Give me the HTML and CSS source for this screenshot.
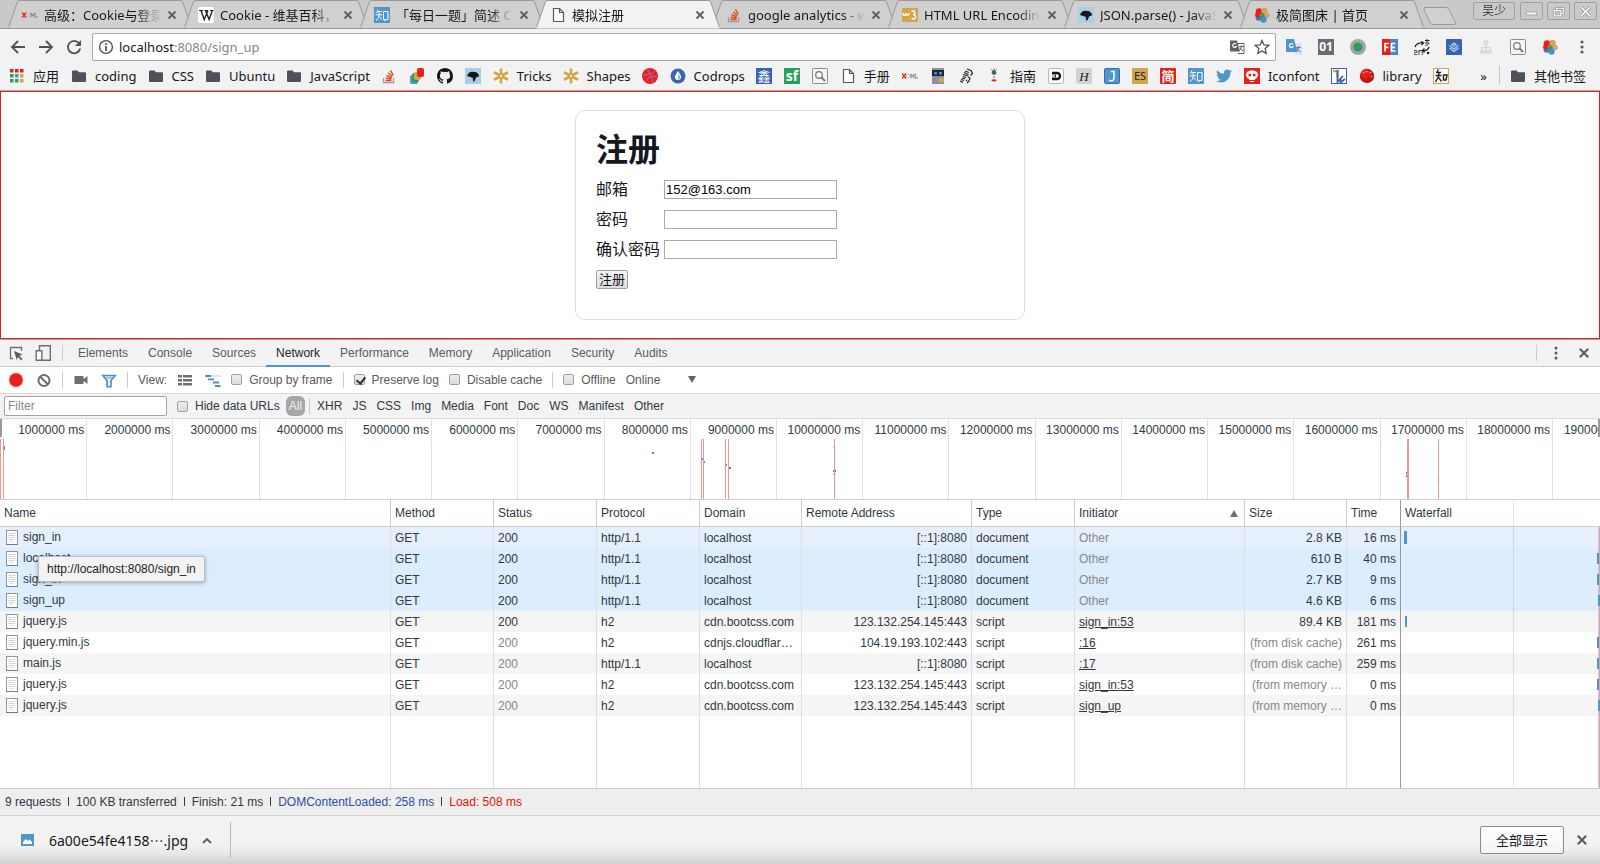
FILE: index.html
```html
<!DOCTYPE html>
<html lang="zh-CN">
<head>
  <meta charset="UTF-8" />
  <meta name="viewport" content="width=device-width, initial-scale=1.0" />
  <title>模拟注册</title>
  <link rel="stylesheet" href="styles.css">
</head>
<body>

<!-- shared icons -->
<svg class="sprite" aria-hidden="true">
  <symbol id="tab-shape" viewBox="0 0 188 29" preserveAspectRatio="none">
    <path d="M0 28.5 C2 28.5 2.500 27 3 26 L11 3 C11.500 1.500 12 .5 14 .5 H174 C176 .5 176.500 1.500 177 3 L185 26 C185.500 27 186 28.500 188 28.500" />
  </symbol>
  <symbol id="close" viewBox="0 0 10 10">
    <path d="M1.500 1.500 8.500 8.500 M8.500 1.500 1.500 8.500" fill="none" stroke="currentColor" stroke-width="1.800" />
  </symbol>
  <symbol id="folder" viewBox="0 0 16 16">
    <path d="M1 3.500a1 1 0 0 1 1-1h4.500l1.500 1.800H14a1 1 0 0 1 1 1V13a1 1 0 0 1-1 1H2a1 1 0 0 1-1-1z" fill="#4e525a" />
  </symbol>
  <symbol id="doc" viewBox="0 0 16 16">
    <path d="M3.500 1.500h6l4 4v9h-10z M9.500 1.500v4h4" fill="#fff" stroke="#55585e" stroke-width="1.200" />
  </symbol>
  <symbol id="xml" viewBox="0 0 16 16">
    <path d="M0 5.500l4 5M4 5.500l-4 5" stroke="#e8201a" stroke-width="1.400" fill="none" />
    <ellipse cx="6.200" cy="8" rx="1.800" ry="2.200" fill="none" stroke="#e5bd86" />
    <path d="M9 10.500V6l1.500 3L12 6v4.500" stroke="#4a91c8" fill="none" />
    <path d="M13.500 5.500V10H16" stroke="#d2a24a" stroke-width="1.300" fill="none" />
  </symbol>
  <symbol id="wiki" viewBox="0 0 16 16">
    <rect width="16" height="16" rx="2" fill="#fff" />
    <path d="M1 3.500h4M6.500 3.500h3.500M12 3.500h3.500" stroke="#222" stroke-width="1" fill="none" />
    <path d="M3 3.500l3.200 9 3.800-9M7.500 3.500l3.600 9 3.200-9" stroke="#222" stroke-width="1.400" fill="none" />
  </symbol>
  <symbol id="zhihu" viewBox="0 0 16 16">
    <rect width="16" height="16" fill="#4f96cd" />
    <path d="M4 2.500 2.500 6M3.500 4.500H8M1.500 7.800H8.200M5.200 4.500v3.300C5 11 3.500 12.500 2 13.500M5.500 9.500 8 12.500M9.500 4.500h4.500v8H12l-1.300 1.300v-1.300H9.500z" stroke="#fff" fill="none" />
  </symbol>
  <symbol id="stack" viewBox="0 0 16 16">
    <path d="M2.500 10v4.500h10V10" stroke="#9a9da3" stroke-width="1.300" fill="none" />
    <path d="M4.500 12.500h6M4.700 10.300l5.800.8M5.500 7.800l5.300 2M7 5l4.500 3.500M9.300 2.500l3 4.700" stroke="#e0501f" stroke-width="1.500" />
  </symbol>
  <symbol id="w3" viewBox="0 0 16 16">
    <rect y="1" width="16" height="14" fill="#d2a54b" />
    <path d="M1 6c0 3 3 3 3 0 0 3 3 3 3.500 0M9.500 4.500c4-2 4.500 3 1.500 3 4 0 3.500 5.500-1.500 4" stroke="#fff" stroke-width="1.400" fill="none" />
  </symbol>
  <symbol id="mdn" viewBox="0 0 16 16">
    <rect width="16" height="16" fill="#a9cfe4" />
    <path d="M2 8c1-3.500 4-5 7-4 3 0 5 2 5 4.500L11.500 9 9 14c-1-1-1.500-2.500-1-4L5 9z" fill="#14171c" />
  </symbol>
  <symbol id="flower" viewBox="0 0 16 16">
    <circle cx="5" cy="4.500" r="3.300" fill="#e8201a" />
    <circle cx="10.500" cy="4" r="3.200" fill="#d2a54b" />
    <circle cx="13" cy="8.500" r="2.800" fill="#d9a07c" />
    <circle cx="9.500" cy="12.500" r="3.200" fill="#4a8fd0" />
    <circle cx="4.500" cy="11" r="2.800" fill="#3c7ac0" />
    <circle cx="3.500" cy="8" r="2.500" fill="#e8201a" />
    <circle cx="8.500" cy="8.500" r="2.200" fill="#27a05e" />
  </symbol>
  <symbol id="gear" viewBox="0 0 16 16">
    <rect width="16" height="16" fill="#faf6ee" />
    <path d="M8 .5v15M1 4.200l14 7.600M15 4.200L1 11.800" stroke="#d2a54b" stroke-width="2.800" />
    <circle cx="8" cy="8" r="1" fill="#fff" />
  </symbol>
  <symbol id="search-box" viewBox="0 0 16 16">
    <rect x=".5" y=".5" width="15" height="15" rx="1" fill="#f5f5f5" stroke="#8c8c8c" />
    <circle cx="7" cy="7" r="3.300" fill="none" stroke="#777" stroke-width="1.200" />
    <path d="M9.500 9.500 13 13" stroke="#777" stroke-width="1.800" />
  </symbol>
  <symbol id="file" viewBox="0 0 12 16">
    <rect x=".5" y=".5" width="11" height="14" fill="#fff" stroke="#8f959f" />
    <path d="M2.500 3.500h3M6.500 3.500h3M2.500 5.500h5M8.500 5.500h1M2.500 7.500h2M5.500 7.500h4M2.500 9.500h5M8.500 9.500h1M3.500 11.500h2M6.500 11.500h1" stroke="#cdcdcd" />
    <path d="M0 14.500h12" stroke="#777c84" />
  </symbol>
</svg>

<header class="browser">
  <div class="tab-strip">
    <div class="tab">
      <svg class="tab-bg"><use href="#tab-shape" /></svg>
      <svg class="icon"><use href="#xml" /></svg>
      <span class="tab-title">高级：Cookie与登录注册</span>
      <button class="tab-close" aria-label="关闭"><svg><use href="#close" /></svg></button>
    </div>
    <div class="tab">
      <svg class="tab-bg"><use href="#tab-shape" /></svg>
      <svg class="icon"><use href="#wiki" /></svg>
      <span class="tab-title">Cookie - 维基百科，自由</span>
      <button class="tab-close" aria-label="关闭"><svg><use href="#close" /></svg></button>
    </div>
    <div class="tab">
      <svg class="tab-bg"><use href="#tab-shape" /></svg>
      <svg class="icon"><use href="#zhihu" /></svg>
      <span class="tab-title">「每日一题」简述 Cookie</span>
      <button class="tab-close" aria-label="关闭"><svg><use href="#close" /></svg></button>
    </div>
    <div class="tab active">
      <svg class="tab-bg"><use href="#tab-shape" /></svg>
      <svg class="icon"><use href="#doc" /></svg>
      <span class="tab-title">模拟注册</span>
      <button class="tab-close" aria-label="关闭"><svg><use href="#close" /></svg></button>
    </div>
    <div class="tab">
      <svg class="tab-bg"><use href="#tab-shape" /></svg>
      <svg class="icon"><use href="#stack" /></svg>
      <span class="tab-title">google analytics - what</span>
      <button class="tab-close" aria-label="关闭"><svg><use href="#close" /></svg></button>
    </div>
    <div class="tab">
      <svg class="tab-bg"><use href="#tab-shape" /></svg>
      <svg class="icon"><use href="#w3" /></svg>
      <span class="tab-title">HTML URL Encoding Ref</span>
      <button class="tab-close" aria-label="关闭"><svg><use href="#close" /></svg></button>
    </div>
    <div class="tab">
      <svg class="tab-bg"><use href="#tab-shape" /></svg>
      <svg class="icon"><use href="#mdn" /></svg>
      <span class="tab-title">JSON.parse() - JavaScript</span>
      <button class="tab-close" aria-label="关闭"><svg><use href="#close" /></svg></button>
    </div>
    <div class="tab">
      <svg class="tab-bg"><use href="#tab-shape" /></svg>
      <svg class="icon"><use href="#flower" /></svg>
      <span class="tab-title">极简图床 | 首页</span>
      <button class="tab-close" aria-label="关闭"><svg><use href="#close" /></svg></button>
    </div>
    <button class="new-tab" aria-label="新标签页">
      <svg viewBox="0 0 34 18"><path d="M3 .5h20q2 0 3 2l6.500 13q.8 2-1.500 2H10q-2 0-3-2L1 3Q0 .5 3 .5z" fill="#d0d0d0" stroke="#999" /></svg>
    </button>
    <div class="window-buttons">
      <button class="user">吴少</button>
      <button aria-label="最小化"><svg viewBox="0 0 22 18"><path d="M6 11h10" stroke="#fff" stroke-width="3" /><path d="M5.500 9.500h11v3h-11z" fill="none" stroke="#999" stroke-width=".8" /></svg></button>
      <button aria-label="还原"><svg viewBox="0 0 22 18"><path d="M9 8V5.500h7v6h-2.500M6.500 8h7v5.500h-7z" fill="none" stroke="#8d8d8d" stroke-width="2.600" /><path d="M9 8V5.500h7v6h-2.500M6.500 8h7v5.500h-7z" fill="none" stroke="#fff" stroke-width="1.200" /></svg></button>
      <button aria-label="关闭窗口"><svg viewBox="0 0 22 18"><path d="M6.500 4.500l9 9M15.500 4.500l-9 9" stroke="#8d8d8d" stroke-width="3.200" /><path d="M6.500 4.500l9 9M15.500 4.500l-9 9" stroke="#fff" stroke-width="1.600" /></svg></button>
    </div>
  </div>

  <div class="nav">
    <button aria-label="后退"><svg class="icon" viewBox="0 0 16 16"><path d="M15 8H2M8 2 2 8l6 6" fill="none" stroke="#4e525a" stroke-width="1.800" /></svg></button>
    <button aria-label="前进"><svg class="icon" viewBox="0 0 16 16"><path d="M1 8h13M8 2l6 6-6 6" fill="none" stroke="#4e525a" stroke-width="1.800" /></svg></button>
    <button aria-label="刷新"><svg class="icon" viewBox="0 0 16 16"><path d="M13 4.200A6.200 6.200 0 1 0 14.200 9.500" fill="none" stroke="#4e525a" stroke-width="1.800" /><path d="M15 1v6H9z" fill="#4e525a" /></svg></button>
    <div class="address">
      <svg class="icon" viewBox="0 0 16 16"><circle cx="8" cy="8" r="6.400" fill="none" stroke="#4e525a" stroke-width="1.400" /><path d="M8 4.200v1.700M8 7v5" stroke="#4e525a" stroke-width="1.700" /></svg>
      <span class="url"><b>localhost</b>:8080/sign_up</span>
      <svg class="icon" viewBox="0 0 16 16"><path d="M8 4.500h7v10H9" fill="#fff" stroke="#5f6368" /><path d="M1 1.500h7l3 11H1z" fill="#5f6368" /><path d="M7.200 5.200a2 2 0 1 0 .2 2.300H5.700" fill="none" stroke="#fff" stroke-width="1.100" /><path d="M10.500 7.500h4M12.500 6.500v1c-.3 2-1 3-2 4M11 8.500c.5 1.500 1.500 2.700 3 3.500" fill="none" stroke="#5f6368" /></svg>
      <svg class="icon" viewBox="0 0 16 16"><path d="M8 1.500l1.900 4.500 4.900.4-3.700 3.200 1.100 4.800L8 11.900l-4.200 2.500 1.100-4.800L1.200 6.400l4.900-.4z" fill="#fff" stroke="#4e525a" stroke-width="1.300" /></svg>
    </div>
    <div class="extensions">
      <svg class="icon" viewBox="0 0 16 16"><path d="M7 4h9v12H9z" fill="#dde3e8" /><path d="M0 0h8l3.500 13H0z" fill="#4f96cd" /><path d="M7 5.500a2 2 0 1 0 0 2.200H5.500" stroke="#fff" stroke-width="1.100" fill="none" /><path d="M10 8.500h5M12.500 7v1.500c0 2-1 3.500-2.500 4.500M11 9c1 2 2 3.500 4 4" stroke="#4f86b8" fill="none" /></svg>
      <svg class="icon" viewBox="0 0 16 16"><rect width="16" height="16" fill="#6a6c70" /><text x="8" y="12" class="glyph bold" fill="#fff" font-size="12">01</text></svg>
      <svg class="icon" viewBox="0 0 16 16"><circle cx="8" cy="8" r="8" fill="#a5a5a5" /><circle cx="8" cy="8" r="4.600" fill="#27a05e" /></svg>
      <svg class="icon" viewBox="0 0 16 16"><rect width="8" height="16" fill="#e8201a" /><rect x="8" width="8" height="16" fill="#4a84c4" /><path d="M3 12.500v-8h4M3 8.300h3.500M13.500 4.500H9.500v7.500h4M9.500 8.300h3.500" fill="none" stroke="#fff" stroke-width="1.700" /></svg>
      <svg class="icon" viewBox="0 0 16 16"><path d="M1 8c1-3 4-4.500 8-4M15 8c-1 3-3 4-6 3.500M7 2.500l2.500 1.500L7.500 6M10.500 9.500L8.500 11.500l2 2" fill="none" stroke="#222" stroke-width="1.300" /><path d="M11 1.500h4.500M13 0v3M11 4h4M11.500 6.500c1.500 0 3-1 3.500-2.500" stroke="#222" fill="none" /><text x="4" y="16" class="glyph" fill="#222" font-size="9">en</text><circle cx="14" cy="14" r="1.300" fill="#222" /></svg>
      <svg class="icon" viewBox="0 0 16 16"><rect width="16" height="16" rx="1" fill="#3a62ae" /><path d="M8 4l2 1.500L8 7 6 5.500zM3.500 6.500L8 10l4.500-3.500M3.500 9L8 12.500 12.500 9" fill="none" stroke="#b8d6ee" stroke-width="1.200" /></svg>
      <svg class="icon" viewBox="0 0 16 16"><path d="M6.500 2h3v3h-3zM8 5v7M4 12V8.500h8V12M3 12h2.500v2H3zM7 12h2v2H7zM10.500 12H13v2h-2.500z" fill="none" stroke="#d0d0d0" stroke-width="1.200" /></svg>
      <svg class="icon"><use href="#search-box" /></svg>
      <svg class="icon"><use href="#flower" /></svg>
      <svg class="icon" viewBox="0 0 16 16"><g fill="#5b5f66"><circle cx="8" cy="3" r="1.600" /><circle cx="8" cy="8" r="1.600" /><circle cx="8" cy="13" r="1.600" /></g></svg>
    </div>
  </div>

  <nav class="bookmarks">
    <a href="#"><svg class="icon" viewBox="0 0 16 16"><g fill="#e8201a"><path d="M1 1h3.500v3.500H1zM6 1h3.500v3.500H6zM11 1h3.500v3.500H11z" /></g><path d="M1 6h3.500v3.500H1zM1 11h3.500v3.500H1zM6 11h3.500v3.500H6z" fill="#27a05e" /><path d="M6 6h3.500v3.500H6z" fill="#4a8fd0" /><path d="M11 6h3.500v3.500H11zM11 11h3.500v3.500H11z" fill="#d2a54b" /></svg>应用</a>
    <a class="named" href="#"><svg class="icon"><use href="#folder" /></svg>coding</a>
    <a class="named" href="#"><svg class="icon"><use href="#folder" /></svg>CSS</a>
    <a class="named" href="#"><svg class="icon"><use href="#folder" /></svg>Ubuntu</a>
    <a class="named" href="#"><svg class="icon"><use href="#folder" /></svg>JavaScript</a>
    <a href="#" aria-label="Stack Overflow"><svg class="icon"><use href="#stack" /></svg></a>
    <a href="#" aria-label="Colors"><svg class="icon" viewBox="0 0 16 16"><rect x="1" y="7" width="8" height="9" rx="2" fill="#4f96cd" /><rect x="3" y="5" width="7" height="9" rx="2" fill="#27a05e" /><rect x="5" y="4" width="7" height="8" rx="2" fill="#d2a54b" /><rect x="8" width="7" height="9" rx="2" fill="#e8201a" /></svg></a>
    <a href="#" aria-label="GitHub"><svg class="icon" viewBox="0 0 16 16"><path fill="#14171c" d="M8 0C3.580 0 0 3.580 0 8c0 3.540 2.290 6.530 5.470 7.590.4.070.55-.17.55-.38 0-.19-.01-.82-.01-1.490-2.010.37-2.530-.49-2.690-.94-.09-.23-.48-.94-.82-1.130-.28-.15-.68-.52-.01-.53.63-.01 1.080.58 1.230.82.72 1.210 1.870.87 2.330.66.07-.52.28-.87.51-1.070-1.780-.2-3.640-.89-3.640-3.950 0-.87.31-1.590.82-2.150-.08-.2-.36-1.020.08-2.120 0 0 .67-.21 2.200.82a7.600 7.600 0 0 1 4 0c1.530-1.040 2.200-.82 2.200-.82.44 1.100.16 1.920.08 2.120.51.56.82 1.270.82 2.150 0 3.070-1.870 3.750-3.650 3.950.29.25.54.73.54 1.480 0 1.070-.01 1.930-.01 2.200 0 .21.15.46.55.38A8 8 0 0 0 16 8c0-4.420-3.580-8-8-8z" /></svg></a>
    <a href="#" aria-label="MDN"><svg class="icon"><use href="#mdn" /></svg></a>
    <a class="named" href="#"><svg class="icon"><use href="#gear" /></svg>Tricks</a>
    <a class="named" href="#"><svg class="icon"><use href="#gear" /></svg>Shapes</a>
    <a href="#" aria-label="Dribbble"><svg class="icon" viewBox="0 0 16 16"><circle cx="8" cy="8" r="8" fill="#e8201a" /><path d="M5 1c3 4 5 9 6 14M1 7c5 0 9-1 12-4M3 14c2-5 7-7 12-5" fill="none" stroke="#c0508a" stroke-width="1.500" /></svg></a>
    <a class="named" href="#"><svg class="icon" viewBox="0 0 16 16"><circle cx="8" cy="8" r="7.500" fill="#3a66ae" /><path d="M8 3c2 3 3 4 3 6a3 3 0 0 1-6 0c0-2 1-3 3-6z" fill="#fff" /><path d="M8 5v6.500c2 0 2.500-1.500 2-3z" fill="#8cbce0" /></svg>Codrops</a>
    <a href="#" aria-label="鑫"><svg class="icon" viewBox="0 0 16 16"><rect width="16" height="16" fill="#3a62ae" /><text x="8" y="13" class="glyph" fill="#fff" font-size="13">鑫</text></svg></a>
    <a href="#" aria-label="SegmentFault"><svg class="icon" viewBox="0 0 16 16"><rect width="16" height="16" fill="#27a05e" /><text x="8" y="13" class="glyph bold" fill="#fff" font-size="14">sf</text></svg></a>
    <a href="#" aria-label="Search"><svg class="icon"><use href="#search-box" /></svg></a>
    <a href="#"><svg class="icon"><use href="#doc" /></svg>手册</a>
    <a href="#" aria-label="XML"><svg class="icon"><use href="#xml" /></svg></a>
    <a href="#" aria-label="Robot"><svg class="icon" viewBox="0 0 16 16"><rect x="2" width="12" height="16" fill="#8e9299" /><rect x="2" y="2" width="12" height="6" fill="#1d2430" /><path d="M4 4h3v2.500H4zM9 4h3v2.500H9z" fill="#4a8fd0" /><rect x="9" y="10" width="5" height="4" fill="#d2a54b" /></svg></a>
    <a href="#" aria-label="Zebra"><svg class="icon" viewBox="0 0 16 16"><path d="M9 1l4 1.500 1.500 3-2 2M7 3l4 1.500M6 4.500l4.500 2M5 6.500l5.500 1.500M5 8.500l3 1M4 10l3 1M3 11.500l3 1M2 13l3 1.500M10 9l2 1-1 3-2 2M8 12l1 1" stroke="#222" stroke-width="1.200" fill="none" /></svg></a>
    <a href="#"><svg class="icon" viewBox="0 0 16 16"><path d="M8 0v2M5 1l1 1M11 1l-1 1" stroke="#888" /><circle cx="8" cy="4.500" r="2.400" fill="#49606e" /><circle cx="8" cy="9" r="1" fill="#999" /><path d="M5 12c2-1 4-1 6 0-2 2-4 2-6 0z" fill="#e8201a" /></svg>指南</a>
    <a href="#" aria-label="D"><svg class="icon" viewBox="0 0 16 16"><rect x=".5" y=".5" width="15" height="15" rx="2" fill="#fafafa" stroke="#b5b5b5" /><path d="M4 5h5a3 3 0 0 1 0 6H4M4 8h4" fill="none" stroke="#14171c" stroke-width="2.400" /><path d="M3 8h4" stroke="#fafafa" stroke-width="1.500" /></svg></a>
    <a href="#" aria-label="H"><svg class="icon" viewBox="0 0 16 16"><rect width="16" height="16" rx="2" fill="#d2d2d2" /><text x="8" y="13" class="glyph serif" fill="#222" font-size="13">H</text></svg></a>
    <a href="#" aria-label="J"><svg class="icon" viewBox="0 0 16 16"><rect x=".5" y=".5" width="15" height="15" rx="1" fill="#4f96cd" stroke="#3a66ae" /><path d="M7 3.500h3V10c0 3-3 3.500-5 2" fill="none" stroke="#fff" stroke-width="1.500" /></svg></a>
    <a href="#" aria-label="ES"><svg class="icon" viewBox="0 0 16 16"><rect width="16" height="16" fill="#d2a54b" /><text x="8" y="12" class="glyph" fill="#222" font-size="11">ES</text></svg></a>
    <a href="#" aria-label="简书"><svg class="icon" viewBox="0 0 16 16"><rect width="16" height="16" rx="1" fill="#e8201a" /><text x="8" y="13" class="glyph bold" fill="#fff" font-size="13">简</text></svg></a>
    <a href="#" aria-label="知乎"><svg class="icon"><use href="#zhihu" /></svg></a>
    <a href="#" aria-label="Twitter"><svg class="icon" viewBox="0 0 24 24"><path fill="#4f96cd" d="M24 4.600c-.9.400-1.800.7-2.800.8 1-.6 1.800-1.600 2.200-2.700-1 .6-2 1-3.100 1.200A4.900 4.900 0 0 0 11.900 8.400C7.800 8.200 4.200 6.200 1.700 3.200c-1.300 2.200-.7 5.100 1.500 6.600-.8 0-1.600-.2-2.200-.6 0 2.300 1.600 4.400 3.900 4.900-.7.200-1.500.2-2.200.1.600 2 2.400 3.400 4.600 3.400A9.900 9.900 0 0 1 0 19.500a14 14 0 0 0 7.500 2.200c9.100 0 14.300-7.700 14-14.600 1-.7 1.800-1.600 2.500-2.500z" /></svg></a>
    <a class="named" href="#"><svg class="icon" viewBox="0 0 16 16"><rect width="16" height="16" fill="#e8201a" /><path d="M8 2.500c4 0 6 2 6 4.500S12 10.500 11 11v1H5v-1C4 10.500 2 9.500 2 7s2-4.500 6-4.500z" fill="#fff" /><circle cx="5.800" cy="7" r="1.500" fill="#e8201a" /><circle cx="10.200" cy="7" r="1.500" fill="#e8201a" /><path d="M6 13.500h4" stroke="#fff" /></svg>Iconfont</a>
    <a href="#" aria-label="N"><svg class="icon" viewBox="0 0 16 16"><rect x=".5" y=".5" width="15" height="15" fill="#fff" stroke="#3a62ae" /><path d="M2 3h4.500v6" stroke="#d2a54b" stroke-width="2.400" fill="none" /><path d="M6.500 2v12L12 8M9.500 9.500v5L14 11" stroke="#3a62ae" stroke-width="1.800" fill="none" /></svg></a>
    <a class="named" href="#"><svg class="icon" viewBox="0 0 16 16"><circle cx="8" cy="8" r="7.200" fill="#b81a16" /><circle cx="6.500" cy="6" r="4.500" fill="#e8201a" /><path d="M4 4l1 1M7 3l1 1M11 4l1 1M12 8l1 1" stroke="#f3b0a8" stroke-width="1.500" /></svg>library</a>
    <a href="#" aria-label="知"><svg class="icon" viewBox="0 0 16 16"><rect x=".5" y=".5" width="15" height="15" fill="#fff" stroke="#d2a54b" /><path d="M5.500 1.500L4 4M3 4.500h5M2.500 7.500h6M6 4.500l-.5 4L2.500 14M5.500 9.500l3 4M10.500 7h3.500l-1 5h-2.500z" stroke="#222" stroke-width="1.400" fill="none" /></svg></a>
    <span class="more">»</span>
    <a class="other" href="#"><svg class="icon"><use href="#folder" /></svg>其他书签</a>
  </nav>
</header>

<main class="page">
  <form class="card">
    <h1>注册</h1>
    <div class="row">
      <label for="email">邮箱</label>
      <input type="text" id="email" name="email" value="152@163.com">
    </div>
    <div class="row">
      <label for="password">密码</label>
      <input type="password" id="password" name="password">
    </div>
    <div class="row">
      <label for="confirm">确认密码</label>
      <input type="password" id="confirm" name="password_confirmation">
    </div>
    <div class="row">
      <button type="submit">注册</button>
    </div>
  </form>
</main>

<section class="devtools">
  <div class="panel-tabs">
    <button aria-label="Inspect"><svg class="icon" viewBox="0 0 16 16"><path d="M5 13.500H2.500v-11h11V6" fill="none" stroke="#6e6e6e" stroke-width="1.300" /><path d="M6 6l8.500 3.500-3.200 1.300 3.200 3.200-1.300 1.200-3.200-3.200L8.800 15z" fill="#5a5a5a" /></svg></button>
    <button aria-label="Device"><svg class="icon" viewBox="0 0 16 16"><path d="M4.500 5V.7h10.800v14.600H7" fill="none" stroke="#6e6e6e" stroke-width="1.400" /><path d="M1.200 5.700h5.600v9.600H1.200z" fill="#fff" stroke="#6e6e6e" stroke-width="1.400" /></svg></button>
    <i class="divider"></i>
    <button class="panel-tab">Elements</button>
    <button class="panel-tab">Console</button>
    <button class="panel-tab">Sources</button>
    <button class="panel-tab selected">Network</button>
    <button class="panel-tab">Performance</button>
    <button class="panel-tab">Memory</button>
    <button class="panel-tab">Application</button>
    <button class="panel-tab">Security</button>
    <button class="panel-tab">Audits</button>
    <i class="divider push"></i>
    <button aria-label="More"><svg class="icon" viewBox="0 0 16 16"><g fill="#5a5a5a"><circle cx="8" cy="3" r="1.500" /><circle cx="8" cy="8" r="1.500" /><circle cx="8" cy="13" r="1.500" /></g></svg></button>
    <button aria-label="Close"><svg class="close-icon"><use href="#close" /></svg></button>
  </div>

  <div class="network-bar">
    <button aria-label="Record"><svg class="icon" viewBox="0 0 16 16"><circle cx="8" cy="8" r="7.800" fill="#f9c9c5" /><circle cx="8" cy="8" r="6.700" fill="#e8201a" /></svg></button>
    <button aria-label="Clear"><svg class="icon" viewBox="0 0 16 16"><circle cx="8" cy="8.500" r="5.500" fill="none" stroke="#6e6e6e" stroke-width="2" /><path d="M4 4.500l8 8" stroke="#6e6e6e" stroke-width="2" /></svg></button>
    <i class="divider"></i>
    <button aria-label="Capture screenshots"><svg class="icon" viewBox="0 0 16 16"><path d="M1.500 4h9v3l4-3v8l-4-3v3h-9z" fill="#6e6e6e" /></svg></button>
    <button aria-label="Filter"><svg class="icon" viewBox="0 0 16 16"><path d="M1.800 3.500h12.400L10 8.500v6.200H6V8.500z" fill="#e4effa" stroke="#4a8fd0" stroke-width="1.600" /><path d="M4 5h8l-1 1.500H5z" fill="#a9b4be" /></svg></button>
    <i class="divider"></i>
    <span class="view">View:</span>
    <button aria-label="Large rows"><svg class="icon" viewBox="0 0 16 16"><path d="M1 3h4v2.500H1zM6 3h9v2.500H6zM1 7h4v2.500H1zM6 7h9v2.500H6zM1 11h4v2.500H1zM6 11h9v2.500H6z" fill="#6e6e6e" /></svg></button>
    <button aria-label="Overview"><svg class="icon" viewBox="0 0 16 16"><path d="M6 4h10" stroke="#d6e6f7" stroke-width="2" /><path d="M0 4h6M3 7.300h6M8 10.500h6M10 14h5.500" stroke="#4a8fd0" stroke-width="1.800" /></svg></button>
    <label><input type="checkbox">Group by frame</label>
    <i class="divider"></i>
    <label><input type="checkbox" checked>Preserve log</label>
    <label><input type="checkbox">Disable cache</label>
    <i class="divider"></i>
    <label><input type="checkbox">Offline</label>
    <select class="throttle" aria-label="Throttling"><option>Online</option></select>
    <svg class="arrow" viewBox="0 0 8 7"><path d="M0 0h8L4 7z" fill="#5f6368" /></svg>
  </div>

  <div class="filter-bar">
    <input class="filter" type="text" placeholder="Filter" aria-label="Filter">
    <label><input type="checkbox">Hide data URLs</label>
    <button class="all">All</button>
    <i class="divider"></i>
    <button>XHR</button>
    <button>JS</button>
    <button>CSS</button>
    <button>Img</button>
    <button>Media</button>
    <button>Font</button>
    <button>Doc</button>
    <button>WS</button>
    <button>Manifest</button>
    <button>Other</button>
  </div>

  <div class="overview">
    <span>1000000 ms</span>
    <span>2000000 ms</span>
    <span>3000000 ms</span>
    <span>4000000 ms</span>
    <span>5000000 ms</span>
    <span>6000000 ms</span>
    <span>7000000 ms</span>
    <span>8000000 ms</span>
    <span>9000000 ms</span>
    <span>10000000 ms</span>
    <span>11000000 ms</span>
    <span>12000000 ms</span>
    <span>13000000 ms</span>
    <span>14000000 ms</span>
    <span>15000000 ms</span>
    <span>16000000 ms</span>
    <span>17000000 ms</span>
    <span>18000000 ms</span>
    <span class="last">19000000 ms</span>
    <!-- load events and request marks -->
    <svg class="marks" shape-rendering="crispEdges">
      <g fill="#4a8fc4">
        <rect x=".25%" y="27" width="1" height="4" />
        <rect x="40.75%" y="33" width="2" height="2" />
        <rect x="43.81%" y="39" width="2" height="2" />
        <rect x="43.94%" y="42" width="2" height="2" />
        <rect x="45.31%" y="45" width="2" height="2" />
        <rect x="45.56%" y="48" width="2" height="2" />
        <rect x="52.06%" y="51" width="3" height="2" />
        <rect x="87.88%" y="53" width="1" height="2" />
        <rect x="87.88%" y="56" width="1" height="2" />
      </g>
      <g fill="#bcd7ea">
        <rect x="52.06%" y="27" width="1" height="2" />
        <rect x="52.06%" y="54" width="3" height="2" />
        <rect x="89.81%" y="60" width="1" height="2" />
      </g>
      <g fill="#f09590">
        <rect x="0" y="20" width="1" height="60" />
        <rect x=".19%" y="20" width="1" height="60" />
        <rect x="43.81%" y="20" width="1" height="60" />
        <rect x="43.94%" y="20" width="1" height="60" />
        <rect x="45.31%" y="20" width="1" height="60" />
        <rect x="45.5%" y="20" width="1" height="60" />
        <rect x="52.12%" y="20" width="1" height="60" />
        <rect x="87.94%" y="20" width="2" height="60" />
        <rect x="89.88%" y="20" width="1" height="60" />
      </g>
    </svg>
    <i class="grip"></i>
    <i class="grip right"></i>
  </div>

  <div class="requests">
    <table>
      <colgroup>
        <col>
        <col class="c-mid">
        <col class="c-mid">
        <col class="c-mid">
        <col class="c-small">
        <col class="c-wide">
        <col class="c-mid">
        <col class="c-wide">
        <col class="c-small">
        <col class="c-time">
        <col class="c-waterfall">
      </colgroup>
      <thead>
        <tr>
          <th>Name</th>
          <th>Method</th>
          <th>Status</th>
          <th>Protocol</th>
          <th>Domain</th>
          <th>Remote Address</th>
          <th>Type</th>
          <th class="sorted">Initiator</th>
          <th>Size</th>
          <th>Time</th>
          <th>Waterfall</th>
        </tr>
      </thead>
      <tbody>
        <tr class="hovered">
          <td><svg class="file"><use href="#file" /></svg>sign_in</td>
          <td>GET</td>
          <td>200</td>
          <td>http/1.1</td>
          <td>localhost</td>
          <td>[::1]:8080</td>
          <td>document</td>
          <td class="dim">Other</td>
          <td>2.8 KB</td>
          <td>16 ms</td>
          <td><i class="bar tall" style="left: 1.5%; width: 3px"></i></td>
        </tr>
        <tr class="nav-request">
          <td><svg class="file"><use href="#file" /></svg>localhost</td>
          <td>GET</td>
          <td>200</td>
          <td>http/1.1</td>
          <td>localhost</td>
          <td>[::1]:8080</td>
          <td>document</td>
          <td class="dim">Other</td>
          <td>610 B</td>
          <td>40 ms</td>
          <td><i class="bar" style="left: 98.5%; width: 2px"></i></td>
        </tr>
        <tr class="nav-request">
          <td><svg class="file"><use href="#file" /></svg>sign_in</td>
          <td>GET</td>
          <td>200</td>
          <td>http/1.1</td>
          <td>localhost</td>
          <td>[::1]:8080</td>
          <td>document</td>
          <td class="dim">Other</td>
          <td>2.7 KB</td>
          <td>9 ms</td>
          <td><i class="bar" style="left: 98.5%; width: 2px"></i></td>
        </tr>
        <tr class="nav-request">
          <td><svg class="file"><use href="#file" /></svg>sign_up</td>
          <td>GET</td>
          <td>200</td>
          <td>http/1.1</td>
          <td>localhost</td>
          <td>[::1]:8080</td>
          <td>document</td>
          <td class="dim">Other</td>
          <td>4.6 KB</td>
          <td>6 ms</td>
          <td><i class="bar" style="left: 99%; width: 2px"></i></td>
        </tr>
        <tr class="odd">
          <td><svg class="file"><use href="#file" /></svg>jquery.js</td>
          <td>GET</td>
          <td>200</td>
          <td>h2</td>
          <td>cdn.bootcss.com</td>
          <td>123.132.254.145:443</td>
          <td>script</td>
          <td><a href="#">sign_in:53</a></td>
          <td>89.4 KB</td>
          <td>181 ms</td>
          <td><i class="bar" style="left: 2%; width: 2px"></i></td>
        </tr>
        <tr>
          <td><svg class="file"><use href="#file" /></svg>jquery.min.js</td>
          <td>GET</td>
          <td class="dim">200</td>
          <td>h2</td>
          <td>cdnjs.cloudflare.com</td>
          <td>104.19.193.102:443</td>
          <td>script</td>
          <td><a href="#">:16</a></td>
          <td class="dim">(from disk cache)</td>
          <td>261 ms</td>
          <td><i class="bar" style="left: 98.5%; width: 2px"></i></td>
        </tr>
        <tr class="odd">
          <td><svg class="file"><use href="#file" /></svg>main.js</td>
          <td>GET</td>
          <td class="dim">200</td>
          <td>http/1.1</td>
          <td>localhost</td>
          <td>[::1]:8080</td>
          <td>script</td>
          <td><a href="#">:17</a></td>
          <td class="dim">(from disk cache)</td>
          <td>259 ms</td>
          <td><i class="bar" style="left: 98.5%; width: 2px"></i></td>
        </tr>
        <tr>
          <td><svg class="file"><use href="#file" /></svg>jquery.js</td>
          <td>GET</td>
          <td class="dim">200</td>
          <td>h2</td>
          <td>cdn.bootcss.com</td>
          <td>123.132.254.145:443</td>
          <td>script</td>
          <td><a href="#">sign_in:53</a></td>
          <td class="dim">(from memory …</td>
          <td>0 ms</td>
          <td><i class="bar" style="left: 98.5%; width: 2px"></i></td>
        </tr>
        <tr class="odd">
          <td><svg class="file"><use href="#file" /></svg>jquery.js</td>
          <td>GET</td>
          <td class="dim">200</td>
          <td>h2</td>
          <td>cdn.bootcss.com</td>
          <td>123.132.254.145:443</td>
          <td>script</td>
          <td><a href="#">sign_up</a></td>
          <td class="dim">(from memory …</td>
          <td>0 ms</td>
          <td><i class="bar" style="left: 99%; width: 2px"></i></td>
        </tr>
        <tr class="filler">
          <td></td><td></td><td></td><td></td><td></td><td></td><td></td><td></td><td></td><td></td><td></td>
        </tr>
      </tbody>
    </table>
    <i class="grid-line"></i>
    <i class="load-line"></i>
    <div class="tooltip">http://localhost:8080/sign_in</div>
  </div>

  <div class="summary">
    <span>9 requests</span>
    <span>100 KB transferred</span>
    <span>Finish: 21 ms</span>
    <span class="dcl">DOMContentLoaded: 258 ms</span>
    <span class="load">Load: 508 ms</span>
  </div>
</section>

<footer class="downloads">
  <div class="download">
    <svg class="picture" viewBox="0 0 13 12"><rect width="13" height="12" fill="#4f96cd" /><path d="M2 10V8l3-3 2 2 1.500-1.500L11 8v2z" fill="#fff" /></svg>
    <span>6a00e54fe4158⋯.jpg</span>
    <svg class="caret" viewBox="0 0 10 7"><path d="M1 6l4-4 4 4" fill="none" stroke="#5b5f66" stroke-width="1.800" /></svg>
  </div>
  <button class="show-all">全部显示</button>
  <button aria-label="关闭"><svg class="close-icon"><use href="#close" /></svg></button>
</footer>

</body>
</html>
```

FILE: styles.css
```css
* {
  box-sizing: border-box;
}

body {
  margin: 0;
  height: 100vh;
  display: flex;
  flex-direction: column;
  background: #fff;
  font-family: 'Noto Sans', 'Noto Sans CJK SC', sans-serif;
  font-size: 13px;
  color: #14171c;
  overflow: hidden;
}

button {
  padding: 0;
  border: 0;
  background: none;
  font: inherit;
  color: inherit;
}

svg {
  display: block;
  flex: none;
}

a {
  color: inherit;
}

.sprite {
  position: absolute;
  width: 0;
  height: 0;
}

.icon {
  width: 16px;
  height: 16px;
}

.glyph {
  text-anchor: middle;
  font-family: 'Noto Sans', 'Noto Sans CJK SC', sans-serif;
}

.glyph.bold {
  font-weight: bold;
}

.glyph.serif {
  font-family: 'Liberation Serif', serif;
  font-style: italic;
}

/* tabs */
.tab-strip {
  position: relative;
  display: flex;
  height: 29px;
  padding-left: 6px;
  background: #c9c9c9;
}

.tab-strip::after {
  content: '';
  position: absolute;
  left: 0;
  right: 0;
  bottom: 0;
  height: 1px;
  background: #999;
}

.tab {
  position: relative;
  display: flex;
  align-items: center;
  gap: 6px;
  flex: 0 1 188px;
  min-width: 0;
  margin-right: -12px;
  padding: 0 17px 0 16px;
}

.tab > * {
  position: relative;
}

.tab .tab-bg {
  position: absolute;
  left: 0;
  top: 0;
  width: 100%;
  height: 29px;
  fill: #d0d0d0;
  stroke: #999;
}

.tab.active {
  z-index: 1;
}

.tab.active .tab-bg {
  fill: #f2f2f2;
}

.tab-title {
  flex: 1;
  overflow: hidden;
  white-space: nowrap;
  line-height: 28px;
  -webkit-mask-image: linear-gradient(to left, transparent, #000 24px);
  mask-image: linear-gradient(to left, transparent, #000 24px);
}

.tab-close svg {
  width: 10px;
  height: 10px;
  color: #5b5f66;
}

.close-icon {
  width: 12px;
  height: 12px;
  color: #5b5f66;
}

.new-tab {
  width: 34px;
  height: 18px;
  margin: 7px 0 0 9px;
}

.window-buttons {
  display: flex;
  gap: 4px;
  margin: 2px 3px 0 auto;
}

.window-buttons button {
  width: 23px;
  height: 18px;
  border: 1px solid #a0a0a0;
  border-radius: 2px;
  background: #c9c9c9;
}

.window-buttons .user {
  width: 42px;
  margin-right: 1px;
  font-size: 12px;
  line-height: 14px;
  color: #333;
  text-shadow: 0 0 1px #fff;
}

/* address bar */
.nav {
  display: flex;
  align-items: center;
  gap: 12px;
  height: 36px;
  padding: 0 10px;
  background: #f2f2f2;
}

.address {
  flex: 1;
  display: flex;
  align-items: center;
  gap: 9px;
  height: 28px;
  margin: 0 -2px;
  padding: 0 5px;
  border: 1px solid #a6a6a6;
  border-radius: 2px;
  background: #fff;
}

.url {
  flex: 1;
  margin-left: -4px;
  color: #888;
}

.url b {
  font-weight: normal;
  color: #14171c;
}

.extensions {
  display: flex;
  gap: 16px;
}

/* bookmarks */
.bookmarks {
  display: flex;
  align-items: center;
  gap: 12px;
  height: 26px;
  padding: 0 14px 4px 9px;
  border-bottom: 1px solid #a9a9a9;
  background: #f2f2f2;
  white-space: nowrap;
}

.bookmarks a {
  display: flex;
  align-items: center;
  gap: 8px;
  text-decoration: none;
}

.bookmarks .named {
  margin-right: -1px;
}

.bookmarks .more {
  margin-left: auto;
}

.bookmarks .other {
  padding-left: 10px;
  border-left: 1px solid #c6c6c6;
}

/* page */
.page {
  padding: 18px 0;
  border: 1px solid #e8201a;
}

.card {
  width: 450px;
  margin: 0 auto;
  padding: 20px;
  border: 1px solid #ddd;
  border-radius: 10px;
  font-size: 16px;
}

.card h1 {
  margin: 0 0 12px;
  font-size: 32px;
  line-height: 36px;
}

.row {
  display: flex;
  align-items: center;
  gap: 4px;
  height: 20px;
  margin-bottom: 10px;
}

.row label {
  width: 64px;
  padding-bottom: 3px;
}

.row input {
  width: 173px;
  height: 19px;
  padding: 1px;
  border: 1px solid #a9a9a9;
  font-family: 'Liberation Sans', Arial, sans-serif;
  font-size: 13px;
}

.row button {
  height: 19px;
  padding: 0 2px;
  border: 1px solid #a0a0a0;
  border-radius: 2px;
  background: linear-gradient(#f5f5f5, #dcdcdc);
  font-size: 13px;
  line-height: 16px;
}

/* devtools */
.devtools {
  flex: 1;
  min-height: 0;
  display: flex;
  flex-direction: column;
  border-top: 1px solid #a3a3a3;
  font-family: 'Liberation Sans', Arial, sans-serif;
  font-size: 12px;
  color: #303942;
}

.divider {
  width: 1px;
  height: 16px;
  background: #ccc;
}

.panel-tabs {
  display: flex;
  align-items: center;
  height: 27px;
  padding: 0 10px 0 8px;
  border-bottom: 1px solid #ccc;
  background: #f3f3f3;
  color: #5a5a5a;
}

.panel-tabs .icon {
  margin-right: 11px;
}

.panel-tabs .divider {
  margin-right: 5px;
}

.panel-tabs .push {
  margin: 0 11px 0 auto;
}

.panel-tab {
  height: 27px;
  padding: 2px 10px 0;
  border-bottom: 2px solid transparent;
}

.panel-tab.selected {
  border-color: #4f96cd;
  color: #222;
}

.panel-tabs .push + button .icon {
  margin-right: 14px;
}

.network-bar {
  display: flex;
  align-items: center;
  gap: 10px;
  height: 27px;
  padding: 0 0 1px 8px;
  border-bottom: 1px solid #dadada;
  color: #5a5a5a;
}

.network-bar button + button {
  margin-left: 2px;
}

.network-bar label,
.filter-bar label {
  display: flex;
  align-items: center;
  gap: 7px;
}

input[type="checkbox"] {
  -webkit-appearance: none;
  appearance: none;
  position: relative;
  width: 11px;
  height: 11px;
  margin: 0;
  border: 1px solid #a0a0a0;
  border-radius: 2px;
  background: linear-gradient(#ececec, #dcdcdc);
}

input[type="checkbox"]:checked::before {
  content: '';
  position: absolute;
  left: 3px;
  top: 0;
  width: 4px;
  height: 7px;
  border: solid #333;
  border-width: 0 2px 2px 0;
  transform: rotate(40deg);
}

.throttle {
  -webkit-appearance: none;
  appearance: none;
  width: 52px;
  padding: 0;
  border: 0;
  background: none;
  font: inherit;
  color: inherit;
}

.arrow {
  width: 8px;
  height: 7px;
}

.filter-bar {
  display: flex;
  align-items: center;
  gap: 10px;
  height: 25px;
  padding-left: 4px;
  border-bottom: 1px solid #dadada;
  background: #f3f3f3;
}

.filter {
  width: 163px;
  height: 20px;
  padding: 0 3px;
  border: 1px solid #a3a3a3;
  border-radius: 2px;
  font: inherit;
}

.filter::placeholder {
  color: #888;
}

.filter-bar .all {
  height: 20px;
  margin: 0 -6px 0 -4px;
  padding: 0 3px;
  border-radius: 6px;
  background: #a6a6a6;
  color: #f0f0f0;
}

.filter-bar .divider {
  margin-right: -3px;
}

.overview {
  position: relative;
  display: flex;
  height: 81px;
  padding-left: 1px;
  border-bottom: 1px solid #ccc;
  overflow: hidden;
}

.overview span {
  flex: 1;
  min-width: 0;
  padding: 4px 2px 0 0;
  border-right: 1px solid #e1e1e1;
  text-align: right;
  white-space: nowrap;
}

.overview .last {
  flex: 0 0 47px;
  padding-left: 11px;
  border: 0;
  text-align: left;
  overflow: hidden;
}

.marks {
  position: absolute;
  left: 0;
  top: 0;
  width: 100%;
  height: 80px;
}

.grip {
  position: absolute;
  left: 0;
  top: 0;
  width: 2px;
  height: 18px;
  background: #999;
}

.grip.right {
  left: auto;
  right: 0;
}

/* request table */
.requests {
  position: relative;
  flex: 1;
  min-height: 0;
  display: grid;
}

table {
  width: 100%;
  height: 100%;
  table-layout: fixed;
  border-collapse: separate;
  border-spacing: 0;
}

.c-mid {
  width: 103px;
}

.c-small {
  width: 102px;
}

.c-wide {
  width: 170px;
}

.c-time {
  width: 54px;
}

.c-waterfall {
  width: 199px;
}

th,
td {
  position: relative;
  padding: 0 4px;
  border-right: 1px solid #dedede;
  text-align: left;
  font-weight: normal;
  white-space: nowrap;
  overflow: hidden;
  text-overflow: ellipsis;
}

th {
  height: 27px;
  border-right-color: #ccc;
  border-bottom: 1px solid #ccc;
}

td {
  height: 21px;
}

.filler td {
  height: auto;
}

th:nth-child(10),
td:nth-child(10) {
  border-right-color: #999;
}

th:last-child,
td:last-child {
  border-right: 0;
}

td:nth-child(6),
td:nth-child(9),
td:nth-child(10) {
  text-align: right;
}

.sorted::after {
  content: '';
  position: absolute;
  right: 6px;
  top: 10px;
  border: 4px solid transparent;
  border-top: 0;
  border-bottom: 7px solid #6e6e6e;
}

.hovered {
  background: #e6f0fd;
}

.nav-request {
  background: #dcedfe;
}

.odd {
  background: #f5f5f5;
}

.dim {
  color: #888;
}

.file {
  display: inline-block;
  width: 12px;
  height: 16px;
  margin: 0 5px 0 2px;
  vertical-align: middle;
}

.bar {
  position: absolute;
  z-index: 1;
  top: 5px;
  height: 11px;
  background: #4f96cd;
}

.bar.tall {
  top: 4px;
  height: 13px;
}

.grid-line {
  position: absolute;
  right: 86px;
  top: 0;
  bottom: 0;
  width: 1px;
  background: rgba(0, 0, 0, 0.1);
}

.load-line {
  position: absolute;
  right: 0;
  top: 27px;
  bottom: 0;
  width: 2px;
  border-left: 1px solid #c3cdee;
  background: #e3a0a0;
}

.tooltip {
  position: absolute;
  left: 38px;
  top: 56px;
  padding: 0 8px;
  border: 1px solid #b9bec6;
  border-radius: 2px;
  background: #f3f3f3;
  box-shadow: 0 1px 4px rgba(0, 0, 0, 0.3);
  line-height: 24px;
  color: #222;
}

.summary {
  display: flex;
  align-items: center;
  height: 28px;
  padding-left: 5px;
  border-top: 1px solid #ccc;
  border-bottom: 1px solid #d0d0d0;
  background: #eee;
}

.summary span + span {
  margin-left: 7px;
}

.summary span + span::before {
  content: '';
  display: inline-block;
  width: 1px;
  height: 9px;
  margin-right: 7px;
  background: #303942;
}

.summary .dcl {
  color: #2a50a0;
}

.summary .load {
  color: #e8120c;
}

/* downloads */
.downloads {
  display: flex;
  align-items: center;
  height: 48px;
  padding: 0 12px 0 0;
  background: linear-gradient(#f2f2f2 60%, #e6e6e6 80%, #cfcfcf);
}

.download {
  display: flex;
  align-items: center;
  width: 231px;
  height: 36px;
  padding-left: 21px;
  border-right: 1px solid #bbb;
  font-size: 14px;
}

.picture {
  width: 13px;
  height: 12px;
  margin-right: 15px;
}

.caret {
  width: 10px;
  height: 7px;
  margin-left: 14px;
}

.show-all {
  width: 84px;
  height: 28px;
  margin: 0 12px 0 auto;
  padding-bottom: 2px;
  border: 1px solid #8c8c8c;
  border-radius: 2px;
  background: linear-gradient(#fff, #f4f4f4);
}
```
